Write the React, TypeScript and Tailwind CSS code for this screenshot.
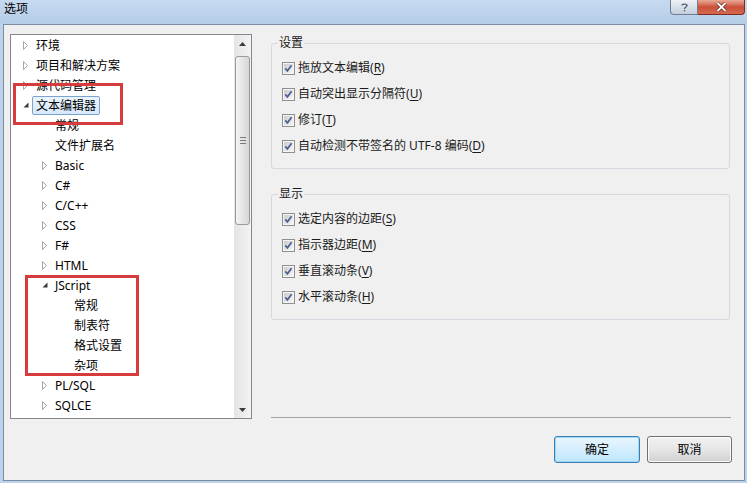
import React from "react";

type TreeNode = {
  label: string;
  level: 0 | 1 | 2;
  state: "open" | "closed" | "leaf";
  selected?: boolean;
};

const tree: TreeNode[] = [
  { label: "环境", level: 0, state: "closed" },
  { label: "项目和解决方案", level: 0, state: "closed" },
  { label: "源代码管理", level: 0, state: "closed" },
  { label: "文本编辑器", level: 0, state: "open", selected: true },
  { label: "常规", level: 1, state: "leaf" },
  { label: "文件扩展名", level: 1, state: "leaf" },
  { label: "Basic", level: 1, state: "closed" },
  { label: "C#", level: 1, state: "closed" },
  { label: "C/C++", level: 1, state: "closed" },
  { label: "CSS", level: 1, state: "closed" },
  { label: "F#", level: 1, state: "closed" },
  { label: "HTML", level: 1, state: "closed" },
  { label: "JScript", level: 1, state: "open" },
  { label: "常规", level: 2, state: "leaf" },
  { label: "制表符", level: 2, state: "leaf" },
  { label: "格式设置", level: 2, state: "leaf" },
  { label: "杂项", level: 2, state: "leaf" },
  { label: "PL/SQL", level: 1, state: "closed" },
  { label: "SQLCE", level: 1, state: "closed" },
];

const indent = ["pl-[12px]", "pl-[31px]", "pl-[50px]"];

const settings = [
  { text: "拖放文本编辑", key: "R" },
  { text: "自动突出显示分隔符", key: "U" },
  { text: "修订", key: "T" },
  { text: "自动检测不带签名的 UTF-8 编码", key: "D" },
];

const display = [
  { text: "选定内容的边距", key: "S" },
  { text: "指示器边距", key: "M" },
  { text: "垂直滚动条", key: "V" },
  { text: "水平滚动条", key: "H" },
];

function Expander({ state }: { state: TreeNode["state"] }) {
  if (state === "closed") {
    return (
      <svg width="9" height="9" viewBox="0 0 9 9" className="shrink-0">
        <path d="M0.5 0.5 L4.5 4.5 L0.5 8.5 Z" fill="#fff" stroke="#a6a6a6" />
      </svg>
    );
  }
  if (state === "open") {
    return (
      <svg width="9" height="9" viewBox="0 0 9 9" className="shrink-0">
        <path d="M5.5 1.5 L5.5 6.5 L0.5 6.5 Z" fill="#3a3a3a" />
      </svg>
    );
  }
  return <span className="w-[9px] shrink-0" />;
}

function CheckBox() {
  return (
    <svg width="13" height="13" viewBox="0 0 13 13" className="shrink-0">
      <defs>
        <linearGradient id="cbfill" x1="0" y1="0" x2="1" y2="1">
          <stop offset="0" stopColor="#cbcbcb" />
          <stop offset="1" stopColor="#f6f6f6" />
        </linearGradient>
      </defs>
      <rect x="0.5" y="0.5" width="12" height="12" fill="#f5f5f5" stroke="#8e8f8f" />
      <rect x="2" y="2" width="9" height="9" fill="url(#cbfill)" />
      <path d="M3.3 6.4 L5.4 8.8 L9.6 3.2" fill="none" stroke="#4c5f94" strokeWidth="1.7" />
    </svg>
  );
}

function Option({ text, hot }: { text: string; hot: string }) {
  return (
    <div className="flex h-[26px] items-center">
      <CheckBox />
      <span className="ml-[3px] text-[12px] leading-[16px] text-[#1a1a1a]">
        {text}(<span className="underline underline-offset-2">{hot}</span>)
      </span>
    </div>
  );
}

function Group({ title, items }: { title: string; items: { text: string; key: string }[] }) {
  return (
    <fieldset className="w-[459px] rounded-[3px] border border-[#d3d9de]">
      <legend className="ml-[6px] px-[1px] text-[12px] leading-[16px] text-[#1a1a1a]">{title}</legend>
      <div className="pl-[10px] pt-[4px] pb-[9px]">
        {items.map((it) => (
          <Option key={it.key} text={it.text} hot={it.key} />
        ))}
      </div>
    </fieldset>
  );
}

export default function App() {
  return (
    <div className="flex h-[483px] w-[747px] flex-col overflow-hidden bg-[#bdd3eb] font-['Noto_Sans','Noto_Sans_CJK_SC',sans-serif] text-black">
      {/* Title bar */}
      <div className="flex h-[24px] shrink-0 items-start justify-between bg-linear-to-b from-[#c6daf0] to-[#b6cde8]">
        <div className="pl-[4px] pt-[1px] text-[12px] leading-[16px]">选项</div>
        <div className="mr-[2px] flex">
          <div className="flex h-[15px] w-[28px] items-center justify-center rounded-bl-[4px] border border-t-0 border-[#6e7d90] bg-linear-to-b from-[#eef2f7] to-[#c3cfdd]">
            <svg width="7" height="9" viewBox="0 0 7 9">
              <path d="M1 2.5 C1 0.6 6 0.6 6 2.6 C6 4 3.5 4 3.5 6" fill="none" stroke="#52637a" strokeWidth="1.4" />
              <rect x="2.8" y="7" width="1.4" height="1.4" fill="#52637a" />
            </svg>
          </div>
          <div className="flex h-[15px] w-[47px] items-center justify-center rounded-br-[4px] border border-t-0 border-l-0 border-[#7d2a1f] bg-linear-to-b from-[#e7a995] via-[#cb4f3a] to-[#d46a4f]">
            <svg width="11" height="10" viewBox="0 0 11 10">
              <path d="M1.5 1 L9.5 9 M9.5 1 L1.5 9" stroke="#5a1e16" strokeWidth="3.2" />
              <path d="M1.5 1 L9.5 9 M9.5 1 L1.5 9" stroke="#fff" strokeWidth="1.8" />
            </svg>
          </div>
        </div>
      </div>

      {/* Client area */}
      <div className="mb-[2px] ml-[3px] mr-[2px] flex flex-1 border border-[#7b8ca1] bg-[#f0f0f0]">
        {/* Tree */}
        <div className="pl-[6px] pt-[9px]">
          <div className="flex h-[385px] w-[242px] border border-[#828790] bg-white">
            <div className="relative flex-1 overflow-hidden">
              {tree.map((n, i) => (
                <div key={i} className={`flex h-[20px] items-center ${indent[n.level]}`}>
                  <Expander state={n.state} />
                  <span
                    className={
                      n.selected
                        ? "rounded-[2px] border border-[#7da2ce] bg-linear-to-b from-[#ebf4fd] to-[#d7e8fb] px-[3px] text-[12px] leading-[17px]"
                        : "border border-transparent px-[3px] text-[12px] leading-[17px]"
                    }
                  >
                    {n.label}
                  </span>
                </div>
              ))}
              <div className="absolute left-[2px] top-[48px] h-[42px] w-[110px] border-[3px] border-[#d83b3b]" />
              <div className="absolute left-[14px] top-[240px] h-[101px] w-[114px] border-[3px] border-[#d83b3b]" />
            </div>
            {/* Scrollbar */}
            <div className="flex w-[17px] flex-col bg-linear-to-r from-[#e4e4e4] to-[#f3f3f3]">
              <div className="flex h-[17px] items-center justify-center">
                <svg width="7" height="4" viewBox="0 0 7 4">
                  <path d="M3.5 0 L7 4 L0 4 Z" fill="#3c3c3c" />
                </svg>
              </div>
              <div className="mx-[1px] mt-[4px] flex h-[169px] flex-col items-center justify-center gap-[2px] rounded-[3px] border border-[#9a9a9a] bg-linear-to-r from-[#f4f4f4] to-[#d6d6d6]">
                <div className="h-px w-[6px] bg-[#7a7a7a]" />
                <div className="h-px w-[6px] bg-[#7a7a7a]" />
                <div className="h-px w-[6px] bg-[#7a7a7a]" />
              </div>
              <div className="flex-1" />
              <div className="flex h-[17px] items-center justify-center">
                <svg width="7" height="4" viewBox="0 0 7 4">
                  <path d="M0 0 L7 0 L3.5 4 Z" fill="#3c3c3c" />
                </svg>
              </div>
            </div>
          </div>
        </div>

        {/* Right side */}
        <div className="ml-[19px] flex w-[461px] flex-col pb-[17px] pt-[10px]">
          <Group title="设置" items={settings} />
          <div className="mt-[17px]">
            <Group title="显示" items={display} />
          </div>
          <div className="mt-auto h-px w-[460px] bg-[#a0a0a0]" />
          <div className="mt-[18px] flex justify-end gap-[7px]">
            <button className="h-[27px] w-[86px] rounded-[3px] border border-[#3c7fb1] bg-linear-to-b from-[#eaf6fd] to-[#bee6fd] text-[12px] shadow-[inset_0_0_0_1px_#9fd7f9]">
              确定
            </button>
            <button className="h-[27px] w-[85px] rounded-[3px] border border-[#707070] bg-linear-to-b from-[#f2f2f2] via-[#e6e6e6] to-[#d0d0d0] text-[12px] shadow-[inset_0_0_0_1px_#fbfbfb]">
              取消
            </button>
          </div>
        </div>
      </div>
    </div>
  );
}
